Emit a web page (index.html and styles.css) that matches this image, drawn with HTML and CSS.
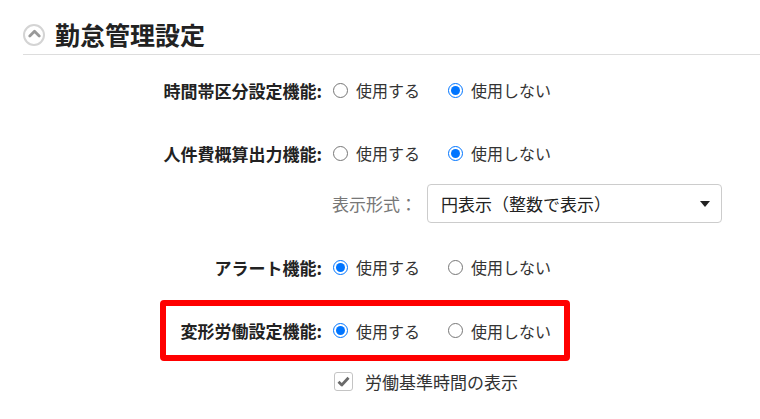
FILE: index.html
```html
<!DOCTYPE html>
<html lang="ja">
<head>
  <meta charset="UTF-8">
  <title>勤怠管理設定</title>
  <link rel="stylesheet" href="styles.css">
</head>
<body>
  <div class="panel-head">
    <span class="toggle">
      <svg width="13" height="9" viewBox="0 0 13 9"><path d="M1.8 7 L6.5 2.3 L11.2 7" fill="none" stroke="#999" stroke-width="2.8" stroke-linecap="round" stroke-linejoin="round"/></svg>
    </span>
    <h2 class="head-title">勤怠管理設定</h2>
  </div>

  <div class="settings">
    <div class="row row-1">
      <div class="label">時間帯区分設定機能:</div>
      <label class="opt"><input type="radio" name="zone"> 使用する</label>
      <label class="opt"><input type="radio" name="zone" checked> 使用しない</label>
    </div>

    <div class="row row-2">
      <div class="label">人件費概算出力機能:</div>
      <label class="opt"><input type="radio" name="cost"> 使用する</label>
      <label class="opt"><input type="radio" name="cost" checked> 使用しない</label>
    </div>

    <div class="sub-row">
      <span class="sub-label">表示形式：</span>
      <div class="select-wrap">
        <select class="select">
          <option>円表示（整数で表示）</option>
          <option>千円表示</option>
        </select>
      </div>
    </div>

    <div class="row row-3">
      <div class="label">アラート機能:</div>
      <label class="opt"><input type="radio" name="alert" checked> 使用する</label>
      <label class="opt"><input type="radio" name="alert"> 使用しない</label>
    </div>

    <div class="row marked">
      <div class="label">変形労働設定機能:</div>
      <label class="opt"><input type="radio" name="flex" checked> 使用する</label>
      <label class="opt"><input type="radio" name="flex"> 使用しない</label>
    </div>

    <label class="check-row">
      <span class="check">
        <svg width="13" height="11" viewBox="0 0 13 11"><path d="M1.5 5.8 L4.8 9 L11.5 1.8" fill="none" stroke="#6a6a6a" stroke-width="2.8" stroke-linejoin="round"/></svg>
      </span>
      労働基準時間の表示
    </label>
  </div>
</body>
</html>
```

FILE: styles.css
```css
body {
  margin: 0;
  font-family: "Noto Sans CJK JP", "Noto Sans", sans-serif;
  font-size: 17px;
  color: #333;
  background: #fff;
}

/* section header */
.panel-head {
  display: flex;
  align-items: center;
  gap: 10px;
  margin: 15px 0 0 23px;
  height: 39px;
  border-bottom: 1px solid #ddd;
}
.toggle {
  width: 22px;
  height: 22px;
  box-sizing: border-box;
  border: 2px solid #d4d4d4;
  border-radius: 50%;
  display: flex;
  align-items: center;
  justify-content: center;
  flex: none;
}
.toggle svg {
  margin-top: -2px;
}
.head-title {
  margin: 0;
  font-size: 25px;
  font-weight: 700;
  line-height: 1;
  color: #222;
}

/* form rows */
.settings {
  display: flex;
  flex-direction: column;
}
.row {
  display: flex;
  align-items: center;
  height: 40px;
}
.row-1 { margin-top: 15px; }
.row-2 { margin-top: 23px; }
.row-3 { margin-top: 24px; }
.label {
  width: 322px;
  margin-right: 11px;
  flex: none;
  text-align: right;
  font-weight: 700;
  color: #222;
  line-height: 1;
}
.opt {
  width: 115px;
  display: flex;
  align-items: center;
  gap: 8px;
  font-size: 16px;
  line-height: 1;
  white-space: nowrap;
}
.opt input {
  width: 15px;
  height: 15px;
  margin: 0;
  flex: none;
}

.sub-row {
  display: flex;
  align-items: center;
  margin: 11px 0 0 332px;
  height: 39px;
}
.sub-label {
  width: 95px;
  color: #777;
  line-height: 1;
}
.select-wrap {
  position: relative;
  width: 295px;
  height: 39px;
}
.select {
  appearance: none;
  width: 100%;
  height: 100%;
  padding: 0 30px 0 13px;
  border: 1px solid #ccc;
  border-radius: 4px;
  background: #fff;
  font-family: inherit;
  font-size: 17px;
  color: #222;
}
.select-wrap::after {
  content: "";
  position: absolute;
  right: 12px;
  top: 17px;
  border-left: 5px solid transparent;
  border-right: 5px solid transparent;
  border-top: 6px solid #222;
}

.marked {
  margin: 13px 0 0 160px;
  width: 410px;
  height: 61px;
  box-sizing: border-box;
  border: 6px solid #f00;
  border-radius: 4px;
}
.marked .label {
  width: 156px;
}

.check-row {
  display: flex;
  align-items: center;
  gap: 12px;
  margin: 10px 0 0 334px;
  height: 20px;
  line-height: 1;
}
.check {
  width: 19px;
  height: 19px;
  box-sizing: border-box;
  border: 1px solid #c4c4c4;
  border-radius: 3px;
  display: flex;
  align-items: center;
  justify-content: center;
  flex: none;
}
```
